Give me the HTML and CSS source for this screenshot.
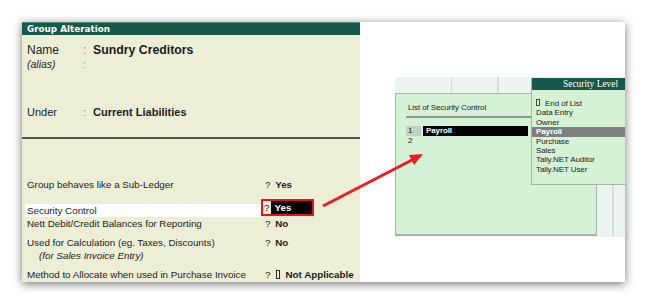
FILE: index.html
```html
<!DOCTYPE html>
<html lang="en">

<head>
    <meta charset="UTF-8">
    <meta name="viewport" content="width=device-width, initial-scale=1.0">
    <title>Group Alteration - Security Control</title>
    <link rel="stylesheet" href="styles.css">
</head>

<body>
    <div id="frame">
        <div id="form">
            <div id="form-head">Group Alteration</div>
            <div id="form-top">
                <div class="field field-name">
                    <span class="field-label">Name</span>
                    <span class="colon">:</span>
                    <span class="field-value">Sundry Creditors</span>
                </div>
                <div class="field field-alias">
                    <span class="field-label">(alias)</span>
                    <span class="colon">:</span>
                </div>
                <div class="field field-under">
                    <span class="field-label">Under</span>
                    <span class="colon">:</span>
                    <span class="field-value">Current Liabilities</span>
                </div>
            </div>
            <div class="rule"></div>
            <div id="opts">
                <div class="opt opt-first">
                    <span class="opt-label">Group behaves like a Sub-Ledger</span>
                    <span class="opt-value">? <b>Yes</b></span>
                </div>
                <div class="opt opt-active">
                    <span class="opt-label">Security Control</span>
                    <span class="opt-value marked">?<b class="cursor">Yes</b></span>
                </div>
                <div class="opt">
                    <span class="opt-label">Nett Debit/Credit Balances for Reporting</span>
                    <span class="opt-value">? <b>No</b></span>
                </div>
                <div class="opt opt-gap">
                    <span class="opt-label">Used for Calculation (eg. Taxes, Discounts)</span>
                    <span class="opt-value">? <b>No</b></span>
                </div>
                <div class="opt">
                    <span class="opt-label sub-label">(for Sales Invoice Entry)</span>
                </div>
                <div class="opt opt-gap">
                    <span class="opt-label">Method to Allocate when used in Purchase Invoice</span>
                    <span class="opt-value">?<i class="nochar"></i><b>Not Applicable</b></span>
                </div>
            </div>
        </div>

        <div id="shot">
            <div id="screen">
                <div class="screen-top">
                    <span class="cell" style="width:56px"></span>
                    <span class="cell" style="width:45px"></span>
                    <span class="cell"></span>
                </div>
                <div class="screen-main">
                    <div class="list-panel">
                        <div class="list-title">List of Security Control</div>
                        <div class="list-row">
                            <span class="num num-on">1</span>
                            <span class="list-item list-sel">Payroll</span>
                        </div>
                        <div class="list-row">
                            <span class="num">2</span>
                        </div>
                    </div>
                    <div class="screen-side">
                        <span class="cell" style="width:15px"></span>
                        <span class="cell"></span>
                    </div>
                </div>

                <div id="popup">
                    <div class="popup-head">Security Level</div>
                    <ul class="popup-list">
                        <li><i class="nochar"></i> End of List</li>
                        <li>Data Entry</li>
                        <li>Owner</li>
                        <li class="popup-sel">Payroll</li>
                        <li>Purchase</li>
                        <li>Sales</li>
                        <li>Tally.NET Auditor</li>
                        <li>Tally.NET User</li>
                    </ul>
                </div>
            </div>
        </div>

        <!-- callout arrow -->
        <svg id="arrow" width="603" height="260" viewBox="0 0 603 260">
            <line x1="301" y1="184" x2="390" y2="138" stroke="#ec1c24" stroke-width="3" />
            <polygon points="401,132 392,143 387,133" fill="#ec1c24" />
        </svg>
    </div>
</body>

</html>
```

FILE: styles.css
```css
* {
    margin: 0;
    padding: 0;
}

html,
body {
    height: 100%;
    background: #fff;
}

body {
    font-family: "Liberation Sans", Arial, sans-serif;
    color: #1c1c1c;
}

#frame {
    position: relative;
    display: flex;
    width: 603px;
    height: 260px;
    margin: 22px 0 0 22px;
    background: #fff;
    box-shadow: 0 2px 9px rgba(0, 0, 0, .55);
}

/* ---------- left: tally form ---------- */

#form {
    width: 338px;
    background-color: #edeed6;
    display: flex;
    flex-direction: column;
}

#form-head {
    height: 13px;
    line-height: 13px;
    padding-left: 5px;
    background-color: #17584a;
    border-top: 1px solid #4f8a76;
    box-sizing: border-box;
    color: #fff;
    font-family: "DejaVu Sans", sans-serif;
    font-weight: bold;
    font-size: 8.8px;
}

#form-top {
    height: 102px;
    padding-top: 7px;
    box-sizing: border-box;
}

.field {
    display: flex;
    align-items: center;
    padding-left: 5px;
}

.field-label {
    width: 56px;
}

.colon {
    width: 10px;
    color: #8a8a80;
}

.field-value {
    font-weight: bold;
}

.field-name {
    height: 15px;
    font-size: 12px;
}

.field-name .field-value {
    font-size: 12.3px;
}

.field-alias {
    height: 14px;
    font-size: 10.5px;
    font-style: italic;
}

.field-alias .colon {
    font-style: normal;
}

.field-under {
    height: 14px;
    margin-top: 34px;
    font-size: 11px;
}

.rule {
    height: 2px;
    background-color: #545650;
}

#opts {
    padding-top: 39px;
    font-size: 9.8px;
}

.opt {
    display: flex;
    align-items: flex-start;
    height: 13px;
    line-height: 13px;
}

.opt-first {
    margin-bottom: 13px;
}

.opt-gap {
    margin-top: 6px;
}

.opt-label {
    width: 235px;
    margin-left: 3px;
    padding-left: 2px;
}

.sub-label {
    padding-left: 14px;
    font-style: italic;
}

.opt-active .opt-label {
    background-color: #fff;
}

.opt-value {
    padding-left: 3px;
    white-space: nowrap;
}

.opt-value b {
    padding-left: 2px;
}

.marked {
    display: flex;
    width: 48px;
    height: 13px;
    margin-left: 1px;
    margin-top: -3px;
    padding-left: 1px;
    outline: 2px solid #e3141b;
}

.marked .cursor {
    flex-grow: 1;
    margin-left: 2px;
    padding-left: 3px;
    background-color: #000;
    color: #fff;
}

.nochar {
    display: inline-block;
    width: 2px;
    height: 7px;
    border: 1px solid #2a2a2a;
    vertical-align: -1px;
}

.opt-value .nochar {
    margin: 0 3px 0 6px;
}

/* ---------- right: screenshot of the list ---------- */

#shot {
    flex-grow: 1;
    padding: 55px 0 0 35px;
}

#screen {
    position: relative;
    height: 160px;
    background-color: #ecf4f1;
    display: flex;
    flex-direction: column;
    font-size: 8px;
    letter-spacing: -.1px;
}

.screen-top {
    height: 16px;
    display: flex;
}

.cell {
    border-right: 1px solid #d3deda;
}

.screen-main {
    flex-grow: 1;
    display: flex;
}

.list-panel {
    width: 202px;
    height: 143px;
    padding: 8px 0 0 10px;
    box-sizing: border-box;
    background-color: #d5f1d6;
    border: 1px solid #a3b7a4;
    border-bottom-width: 2px;
}

.list-title {
    height: 14px;
    line-height: 12px;
    padding-left: 2px;
    margin-right: -2px;
    border-bottom: 2px solid #8c968e;
}

.list-title + .list-row {
    margin-top: 8px;
}

.list-row {
    display: flex;
    height: 9.5px;
    line-height: 9.5px;
}

.num {
    width: 15px;
    padding-left: 2px;
    box-sizing: border-box;
}

.num-on {
    background-color: #bfd3c0;
}

.list-sel {
    width: 105px;
    box-sizing: border-box;
    margin-left: 2px;
    padding-left: 3px;
    background-color: #000;
    color: #fff;
    font-weight: bold;
}

.screen-side {
    flex-grow: 1;
    display: flex;
}

#popup {
    position: absolute;
    top: 1px;
    right: 0;
    width: 94px;
    height: 107px;
    background-color: #d5f1d6;
    border-left: 1px solid #a3b7a4;
    border-bottom: 1px solid #a3b7a4;
    box-sizing: border-box;
}

.popup-head {
    height: 12px;
    line-height: 12px;
    padding-right: 7px;
    text-align: right;
    background-color: #17584a;
    color: #fff;
    font-family: "Liberation Serif", "Times New Roman", serif;
    font-size: 9.4px;
    letter-spacing: 0;
}

.popup-list {
    list-style: none;
    padding-top: 9px;
}

.popup-list li {
    height: 9.4px;
    line-height: 9.4px;
    padding-left: 4px;
}

.popup-list .nochar {
    height: 5px;
    margin-right: 3px;
    border-color: #444;
    vertical-align: 0;
}

.popup-sel {
    background-color: #7f7f7f;
    color: #fff;
    font-weight: bold;
}

#arrow {
    position: absolute;
    left: 0;
    top: 0;
}
```
